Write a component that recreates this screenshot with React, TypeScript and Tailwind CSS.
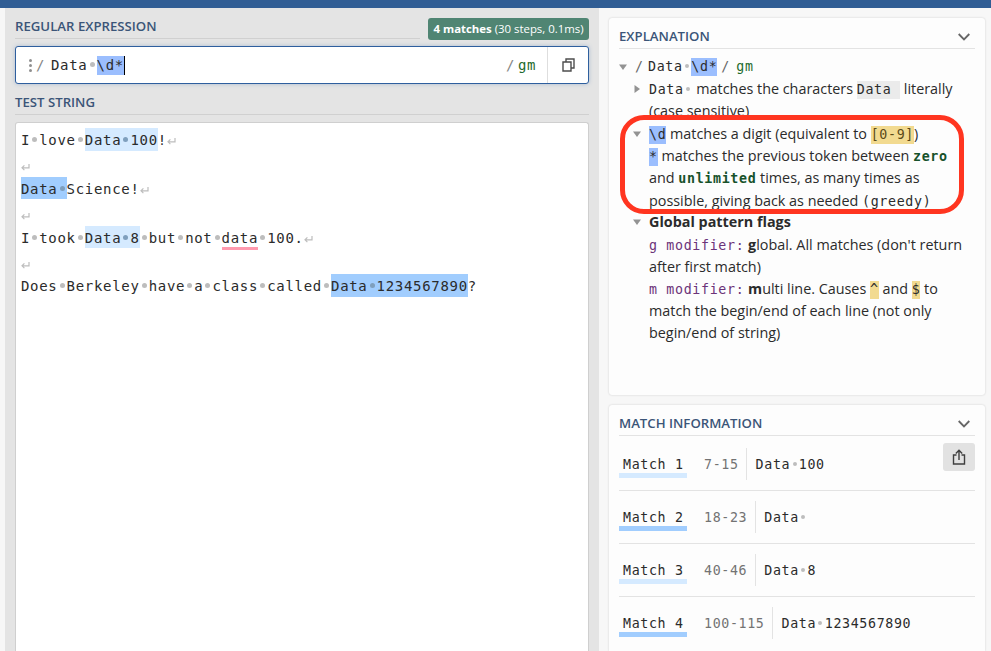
import type { ReactNode } from "react";

const mono = "font-['DejaVu_Sans_Mono',monospace]";

function Dot({ small = false, tint = false }: { small?: boolean; tint?: boolean }) {
  return (
    <span className={`inline-flex shrink-0 justify-center align-[3px] ${small ? "w-[8.65px]" : "w-[9.12px]"}`}>
      <span className={`rounded-full ${small ? "size-1" : "size-[5px]"} ${tint ? "bg-[#7f9fbd]" : "bg-[#bdbdbd]"}`} />
    </span>
  );
}

/* Turns the "·" marks of a string into drawn whitespace dots. */
function Spaced({ text, small, tint }: { text: string; small?: boolean; tint?: boolean }) {
  return (
    <>
      {text.split("·").map((part, i) => (
        <span key={i}>
          {i > 0 && <Dot small={small} tint={tint} />}
          {part}
        </span>
      ))}
    </>
  );
}

function Return({ alone = false }: { alone?: boolean }) {
  return (
    <svg className={`inline-block ${alone ? "-mb-px align-[-1px]" : "align-[0px]"}`} width="9" height="7" viewBox="0 0 9 7" fill="none" stroke="#bdbdbd" strokeWidth="1.2">
      <path d="M8 0v3.8H1M3.4 1.4L1 3.8l2.4 2.4" />
    </svg>
  );
}

function Match({ text, strong = false }: { text: string; strong?: boolean }) {
  return (
    <span className={`inline-block h-[22.5px] leading-[24px] ${strong ? "bg-[#a1cdfe]" : "bg-[#d5eaff]"}`}>
      <Spaced text={text} tint />
    </span>
  );
}

function Code({ children, className = "" }: { children: ReactNode; className?: string }) {
  return <span className={`${mono} inline-block h-[18px] text-[13.3px] leading-[18px] tracking-[0.66px] ${className}`}>{children}</span>;
}

function Row({ children, arrow, className = "" }: { children: ReactNode; arrow?: "down" | "right"; className?: string }) {
  return (
    <div className={`flex h-[22.2px] ${className}`}>
      <span className="flex w-[16px] shrink-0 items-center">
        {arrow && (
          <svg width="8" height="8" viewBox="0 0 8 8" fill="#939393">
            <path d={arrow === "down" ? "M0 1.5h8L4 7z" : "M1.5 0v8L7 4z"} />
          </svg>
        )}
      </span>
      <span className="flex items-baseline whitespace-pre leading-[22px]">{children}</span>
    </div>
  );
}

function Heading({ children }: { children: ReactNode }) {
  return (
    <div className="flex h-[31px] items-center justify-between border-b border-[#e3e3e3] pt-[8px] pr-[5px] text-[13.2px] font-semibold text-[#3b5578]">
      {children}
      <svg className="-mt-px" width="12" height="8" viewBox="0 0 12 8" fill="none" stroke="#666" strokeWidth="1.8">
        <path d="M.7 1l5.3 5.4L11.3 1" />
      </svg>
    </div>
  );
}

const matches = [
  { range: "7-15", text: "Data·100" },
  { range: "18-23", text: "Data·", strong: true },
  { range: "40-46", text: "Data·8" },
  { range: "100-115", text: "Data·1234567890", strong: true },
];

export default function App() {
  return (
    <div className="flex h-[651px] w-[991px] flex-col overflow-hidden bg-[#f7f7f7] font-['Open_Sans',sans-serif] text-[#2b2b2b]">
      <div className="h-2 shrink-0 bg-[#305d94]" />
      <div className="flex min-h-0 flex-1">
        <main className="ml-[5px] flex w-[594px] shrink-0 flex-col bg-[#e4e4e4] px-[10px]">
          <div className="flex h-[38px] justify-between">
            <div className="h-[31px] w-[405px] border-b border-[#d0d0d0] pt-[9px] text-[13.2px] leading-[18px] font-semibold text-[#3b5578]">
              REGULAR EXPRESSION
            </div>
            <div className="mt-[10px] h-[22px] w-[161px] rounded-[3px] bg-[#508573] text-center text-[11.4px] leading-[22px] whitespace-nowrap text-white">
              <b>4 matches</b> (30 steps, 0.1ms)
            </div>
          </div>
          <div className={`${mono} flex h-[38px] shrink-0 items-center rounded-[3px] border border-[#2f5f9e] bg-white text-[14px] tracking-[0.69px] shadow-[0_0_4px_#aabbd0]`}>
            <span className="ml-[11px] flex w-[6px] flex-col items-center gap-[2px]">
              <i className="size-[3px] rounded-full bg-[#8f8f8f]" />
              <i className="size-[3px] rounded-full bg-[#8f8f8f]" />
              <i className="size-[3px] rounded-full bg-[#8f8f8f]" />
            </span>
            <span className="ml-[3px] w-[15px] leading-5 text-[#858585]">/</span>
            <span className="leading-[19px]">
              <Spaced text="Data·" />
            </span>
            <span className="h-[19px] border-r border-black bg-[#9bbefe] leading-[19px]">\d*</span>
            <span className="ml-auto leading-5 text-[#858585]">/</span>
            <span className="ml-[3px] w-[29px] leading-5 text-[#1e6b2d]">gm</span>
            <span className="flex h-full w-[41px] items-center justify-center border-l border-[#dedede]">
              <svg width="13" height="14" viewBox="0 0 13 14" fill="none" stroke="#4d4d4d" strokeWidth="1.4">
                <path d="M1 4h8v9H1zM4 4V1h8v9H9" />
              </svg>
            </span>
          </div>
          <div className="h-[31px] shrink-0 border-b border-[#d0d0d0] pt-[9px] text-[13.2px] leading-[18px] font-semibold text-[#3b5578]">
            TEST STRING
          </div>
          <div className={`${mono} mt-[7px] flex-1 rounded-t-[3px] border border-b-0 border-[#cfcfcf] bg-white pt-[5px] pl-[5px] text-[14px] tracking-[0.69px] whitespace-pre`}>
            <div className="h-[24.4px] leading-[24px]"><Spaced text="I·love·" /><Match text="Data·100" />!<Return /></div>
            <div className="h-[24.4px] leading-[24px]"><Return alone /></div>
            <div className="h-[24.4px] leading-[24px]"><Match text="Data·" strong />Science!<Return /></div>
            <div className="h-[24.4px] leading-[24px]"><Return alone /></div>
            <div className="h-[24.4px] leading-[24px]">
              <Spaced text="I·took·" /><Match text="Data·8" /><Spaced text="·but·not·" />
              <span className="inline-block h-[23px] border-b-[3px] border-[#ff9aae] leading-[22px]">data</span>
              <Spaced text="·100." /><Return />
            </div>
            <div className="h-[24.4px] leading-[24px]"><Return alone /></div>
            <div className="h-[24.4px] leading-[24px]"><Spaced text="Does·Berkeley·have·a·class·called·" /><Match text="Data·1234567890" strong />?</div>
          </div>
        </main>

        <aside className="ml-[10px] flex w-[376px] shrink-0 flex-col pt-[10px]">
          <section className="relative h-[377px] shrink-0 rounded-[3px] bg-[#fdfdfd] px-[10px] text-[14.37px] shadow-[0_0_2px_#c8c8c8]">
            <Heading>EXPLANATION</Heading>
            <div className="pt-[7px]">
              <Row arrow="down">
                <span className="flex pt-[2px]">
                  <Code className="w-[13px] text-[#666]">/</Code>
                  <Code><Spaced text="Data·" small /></Code>
                  <Code className="bg-[#9bbefe]">\d*</Code>
                  <Code className="ml-[4px] w-[15px] text-[#666]">/</Code>
                  <Code className="text-[#1e6b2d]">gm</Code>
                </span>
              </Row>
              <div className="pl-[14px]">
                <Row arrow="right"><Code><Spaced text="Data·" small /></Code><span className="ml-1">matches the characters </span><Code className="bg-[#ebebeb]">Data </Code><span> literally</span></Row>
                <Row>(case sensitive)</Row>
                <Row arrow="down"><Code className="bg-[#9bbefe]">\d</Code><span> matches a digit (equivalent to </span><Code className="bg-[#f2da90] text-[#5b4a18]">[0-9]</Code><span>)</span></Row>
                <Row><Code className="bg-[#9bbefe]">*</Code><span> matches the previous token between </span><Code className="font-bold text-[#17522a]">zero</Code></Row>
                <Row className="pt-[0.3px]"><span>and </span><Code className="font-bold text-[#17522a]">unlimited</Code><span> times, as many times as</span></Row>
                <Row className="pt-[0.5px]"><span>possible, giving back as needed </span><Code>(greedy)</Code></Row>
                <Row arrow="down"><b>Global pattern flags</b></Row>
                <Row><Code className="text-[#6c3379]">g modifier:</Code><span> <b>g</b>lobal. All matches (don't return</span></Row>
                <Row>after first match)</Row>
                <Row><Code className="text-[#6c3379]">m modifier:</Code><span> <b>m</b>ulti line. Causes </span><Code className="bg-[#f2da90]">^</Code><span> and </span><Code className="bg-[#f2da90]">$</Code><span> to</span></Row>
                <Row>match the begin/end of each line (not only</Row>
                <Row>begin/end of string)</Row>
              </div>
            </div>
            <div className="absolute top-[97px] left-[11px] h-[99px] w-[344px] rounded-[24px] border-[5px] border-[#ff3520]" />
          </section>

          <section className="mt-[10px] flex-1 rounded-t-[3px] bg-[#fdfdfd] px-[10px] shadow-[0_0_2px_#c8c8c8]">
            <Heading>MATCH INFORMATION</Heading>
            {matches.map((m, i) => (
              <div key={m.range} className={`${mono} flex border-[#e3e3e3] text-[13.3px] tracking-[0.64px] ${i === 0 ? "h-[55px] pt-[12px]" : "h-[53px] pt-[10px]"} ${i < 3 ? "border-b" : ""}`}>
                <span className={`mt-[3px] h-[27px] w-[68px] border-b-[5px] pl-1 leading-[28px] whitespace-pre ${m.strong ? "border-[#a1cdfe]" : "border-[#d5eaff]"}`}>
                  Match {i + 1}
                </span>
                <span className="mt-[3px] ml-[17px] pr-[7.5px] leading-[28px] text-[#737373]">{m.range}</span>
                <span className="h-[32px] border-l border-[#e3e3e3] pt-[3px] pl-[8.5px] leading-[28px]"><Spaced text={m.text} small /></span>
                {i === 0 && (
                  <button className="-mt-[5px] ml-auto flex h-[28px] w-8 items-center justify-center rounded-[3px] bg-[#e2e2e2]">
                    <svg width="14" height="16" viewBox="0 0 14 16" fill="none" stroke="#3f3f3f" strokeWidth="1.4">
                      <path d="M4.5 6H1.5v9h11V6h-3M7 11V1.5M3.8 4.5L7 1.3l3.2 3.2" />
                    </svg>
                  </button>
                )}
              </div>
            ))}
          </section>
        </aside>
      </div>
    </div>
  );
}
